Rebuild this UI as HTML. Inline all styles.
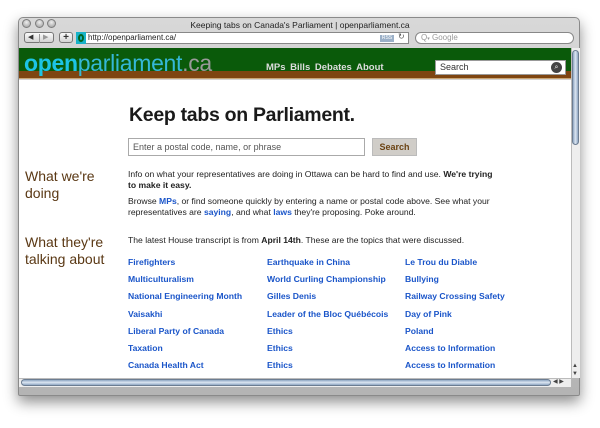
<!DOCTYPE html>
<html><head><meta charset="utf-8"><style>
*{margin:0;padding:0;box-sizing:border-box}
body{width:600px;height:428px;background:#fff;font-family:"Liberation Sans",Arial,sans-serif;position:relative;overflow:hidden}
.abs{position:absolute}
#win{left:18px;top:17px;width:562px;height:379px;background:linear-gradient(#d8d8d8,#b4b4b4);border-radius:5px 5px 2px 2px;box-shadow:0 6px 14px rgba(0,0,0,.45);border:1px solid #8a8a8a}
.tl{width:9px;height:9px;border-radius:50%;background:radial-gradient(circle at 50% 35%,#eee,#9a9a9a);border:1px solid #7d7d7d;top:19px}
.btn{background:linear-gradient(#fafafa,#d4d4d4);border:1px solid #777;border-radius:3px;height:11px;top:32px}
.field{background:#fff;border:1px solid #888;top:32px;height:12px;font-size:8px;line-height:10px;color:#222}
#green{left:19px;top:48px;width:552px;height:23px;background:#0a5a0a}
#brown{left:19px;top:71px;width:552px;height:8px;background:#7e4511;border-bottom:1px solid #c9a574}
#logo{left:24px;top:50px;font-size:23px;line-height:26px;letter-spacing:-.3px;white-space:nowrap}
#nav{left:266px;top:62px;font-size:9.5px;font-weight:bold;color:#ddd;word-spacing:2px}
#page{left:19px;top:80px;width:552px;height:298px;background:#fff}
.lbl{left:25px;font-size:14px;line-height:17px;color:#5a3814}
.t{font-size:8.6px;color:#222;line-height:11px;left:128px;white-space:nowrap}
a{color:#1a55c9;text-decoration:none;font-weight:bold}
.lk{font-size:8.6px;font-weight:bold;color:#1a55c9;white-space:nowrap;line-height:17.2px}
</style></head><body>
<div id="win" class="abs"></div>
<div class="abs tl" style="left:22px"></div>
<div class="abs tl" style="left:35px"></div>
<div class="abs tl" style="left:47px"></div>
<div class="abs" style="left:0;width:600px;top:20px;text-align:center;font-size:8.5px;color:#222">Keeping tabs on Canada's Parliament | openparliament.ca</div>
<div class="abs btn" style="left:24px;width:30px"></div>
<div class="abs" style="left:28px;top:33px;font-size:7px;color:#333">◀</div>
<div class="abs" style="left:39px;top:34px;width:1px;height:9px;background:#999"></div>
<div class="abs" style="left:43px;top:33px;font-size:7px;color:#999">▶</div>
<div class="abs btn" style="left:59px;width:14px;font-size:10px;line-height:9px;text-align:center;font-weight:bold;color:#333">+</div>
<div class="abs field" style="left:76px;width:333px;padding-left:11px">http://openparliament.ca/</div>
<div class="abs" style="left:76px;top:32px;width:10px;height:12px;background:#19b3c9"><div style="margin:2px;width:6px;height:8px;border:2px solid #062;border-radius:50%"></div></div>
<div class="abs" style="left:380px;top:35px;width:14px;height:7px;background:#9bb0c8;font-size:5px;color:#fff;text-align:center">RSS</div>
<div class="abs" style="left:398px;top:32px;font-size:8px;color:#555">↻</div>
<div class="abs field" style="left:415px;width:159px;border-radius:7px;padding-left:5px;color:#999">Q<span style="font-size:5px">▾</span> Google</div>
<div id="green" class="abs"></div>
<div id="brown" class="abs"></div>
<div id="logo" class="abs"><span style="color:#1cc4e6;font-weight:bold">open</span><span style="color:#35b8d8">parliament</span><span style="color:#9a9a9a">.ca</span></div>
<div id="nav" class="abs">MPs Bills Debates About</div>
<div class="abs" style="left:435px;top:60px;width:131px;height:15px;background:#fff;border:1px solid #999;font-size:9px;line-height:13px;padding-left:4px;color:#333">Search</div>
<div class="abs" style="left:551px;top:62px;width:11px;height:11px;border-radius:50%;background:#444;color:#fff;font-size:7px;text-align:center;line-height:11px">⌕</div>
<div id="page" class="abs"></div>
<div class="abs" style="left:571px;top:48px;width:9px;height:330px;background:#eee;border-left:1px solid #bbb"></div>
<div class="abs" style="left:572px;top:50px;width:7px;height:95px;border-radius:4px;background:linear-gradient(90deg,#8ea6c2,#dce6f2,#8ea6c2);border:1px solid #6c7d92"></div>
<div class="abs" style="left:572px;top:362px;font-size:6px;color:#444;line-height:8px">▲<br>▼</div>
<div class="abs" style="left:19px;top:378px;width:552px;height:9px;background:#eee;border-top:1px solid #bbb"></div>
<div class="abs" style="left:21px;top:379px;width:530px;height:7px;border-radius:4px;background:linear-gradient(#8ea6c2,#dce6f2,#8ea6c2);border:1px solid #6c7d92"></div>
<div class="abs" style="left:553px;top:378px;font-size:6px;color:#444">◀ ▶</div>

<div class="abs" style="left:129px;top:104px;font-size:19.5px;font-weight:bold;color:#1a1a1a;letter-spacing:-.3px">Keep tabs on Parliament.</div>
<div class="abs" style="left:128px;top:138px;width:237px;height:18px;border:1px solid #aaa;font-size:9px;line-height:16px;padding-left:4px;color:#555">Enter a postal code, name, or phrase</div>
<div class="abs" style="left:372px;top:138px;width:45px;height:18px;background:#d0cdc8;border:1px solid #bbb;font-size:9px;line-height:16px;text-align:center;font-weight:bold;color:#6b4313">Search</div>

<div class="abs lbl" style="top:168px">What we're<br>doing</div>
<div class="abs lbl" style="top:234px">What they're<br>talking about</div>
<div class="abs t" style="top:169px">Info on what your representatives are doing in Ottawa can be hard to find and use. <b>We're trying</b><br><b>to make it easy.</b></div>
<div class="abs t" style="top:196px">Browse <a>MPs</a>, or find someone quickly by entering a name or postal code above. See what your<br>representatives are <a>saying</a>, and what <a>laws</a> they're proposing. Poke around.</div>
<div class="abs t" style="top:235px">The latest House transcript is from <b>April 14th</b>. These are the topics that were discussed.</div>

<div class="abs lk" style="left:128px;top:254px">Firefighters<br>Multiculturalism<br>National Engineering Month<br>Vaisakhi<br>Liberal Party of Canada<br>Taxation<br>Canada Health Act</div>
<div class="abs lk" style="left:267px;top:254px">Earthquake in China<br>World Curling Championship<br>Gilles Denis<br>Leader of the Bloc Québécois<br>Ethics<br>Ethics<br>Ethics</div>
<div class="abs lk" style="left:405px;top:254px">Le Trou du Diable<br>Bullying<br>Railway Crossing Safety<br>Day of Pink<br>Poland<br>Access to Information<br>Access to Information</div>
</body></html>
